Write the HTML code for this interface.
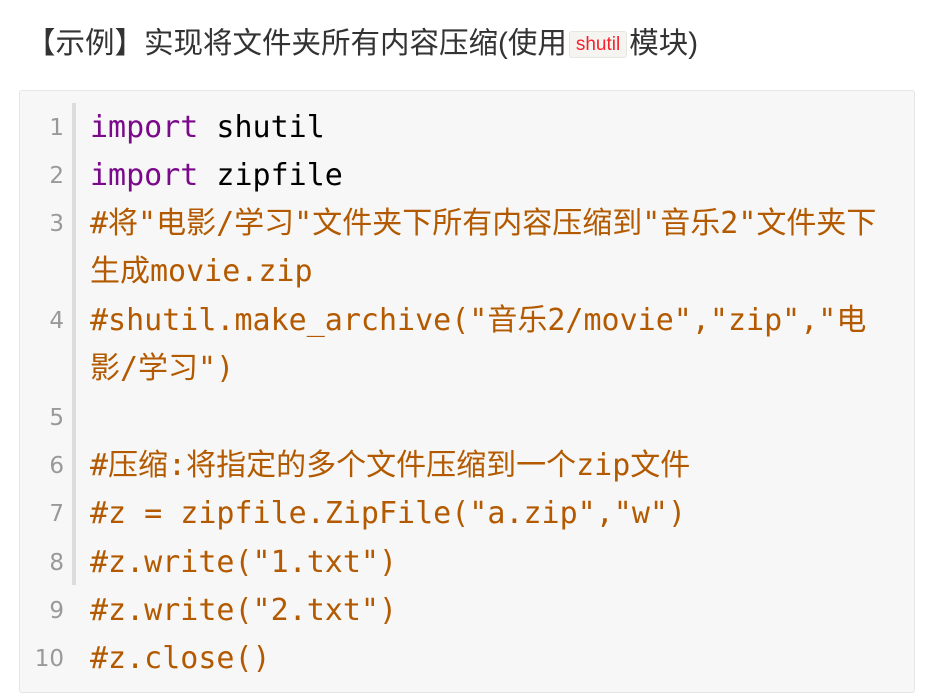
<!DOCTYPE html>
<html><head><meta charset="utf-8"><style>
body{margin:0;background:#fff;width:931px;height:697px;overflow:hidden;position:relative;font-family:"Liberation Sans","Noto Sans CJK SC",sans-serif;}
.title{position:absolute;left:26px;top:23px;font-size:29.5px;color:#333;line-height:42px;white-space:nowrap;}
.ic{font-size:19px;color:#f5222d;background:#f6f4f0;border:1px solid #e8e6e0;border-radius:3px;padding:2px 6px;margin:0 2px;vertical-align:3px;}
.box{position:absolute;left:19px;top:90px;width:894px;height:601px;background:#f7f7f7;border:1px solid #e6e6e6;border-radius:3px;}
.bar{position:absolute;left:72px;top:103px;width:4px;height:482px;background:#dcdcdc;}
.ln{position:absolute;left:18px;width:46px;text-align:right;font-family:"DejaVu Sans",sans-serif;font-size:23px;color:#999;line-height:30px;}
.cl{position:absolute;left:90px;font-family:"DejaVu Sans Mono","Noto Sans CJK SC",monospace;font-size:30px;line-height:40px;white-space:pre;color:#b35a00;}
.k{color:#7a0a8a}.n{color:#000}
</style></head><body>
<div class="title">【示例】实现将文件夹所有内容压缩(使用<span class="ic">shutil</span>模块)</div>
<div class="box"></div>
<div class="bar"></div>
<div class="ln" style="top:113px">1</div>
<div class="ln" style="top:161px">2</div>
<div class="ln" style="top:209px">3</div>
<div class="ln" style="top:306px">4</div>
<div class="ln" style="top:403px">5</div>
<div class="ln" style="top:451px">6</div>
<div class="ln" style="top:499px">7</div>
<div class="ln" style="top:548px">8</div>
<div class="ln" style="top:596px">9</div>
<div class="ln" style="top:644px">10</div>
<div class="cl" style="top:108px"><span class="k">import</span><span class="n"> shutil</span></div>
<div class="cl" style="top:156px"><span class="k">import</span><span class="n"> zipfile</span></div>
<div class="cl" style="top:204px">#将"电影/学习"文件夹下所有内容压缩到"音乐2"文件夹下</div>
<div class="cl" style="top:252px">生成movie.zip</div>
<div class="cl" style="top:301px">#shutil.make_archive("音乐2/movie","zip","电</div>
<div class="cl" style="top:349px">影/学习")</div>
<div class="cl" style="top:446px">#压缩:将指定的多个文件压缩到一个zip文件</div>
<div class="cl" style="top:494px">#z = zipfile.ZipFile("a.zip","w")</div>
<div class="cl" style="top:543px">#z.write("1.txt")</div>
<div class="cl" style="top:591px">#z.write("2.txt")</div>
<div class="cl" style="top:639px">#z.close()</div>
</body></html>
